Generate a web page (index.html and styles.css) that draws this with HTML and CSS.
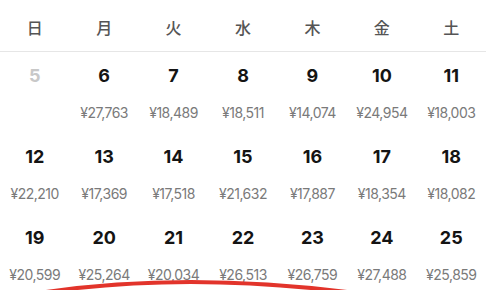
FILE: index.html
```html
<!DOCTYPE html>
<html lang="ja">
<head>
<meta charset="utf-8">
<link rel="stylesheet" href="styles.css">
</head>
<body>
<div class="cal">
  <div class="head">
    <div>日</div><div>月</div><div>火</div><div>水</div><div>木</div><div>金</div><div>土</div>
  </div>
  <div class="week">
    <div class="cell"><span class="date muted">5</span><span class="price"></span></div>
    <div class="cell"><span class="date">6</span><span class="price">¥27,763</span></div>
    <div class="cell"><span class="date">7</span><span class="price">¥18,489</span></div>
    <div class="cell"><span class="date">8</span><span class="price">¥18,511</span></div>
    <div class="cell"><span class="date">9</span><span class="price">¥14,074</span></div>
    <div class="cell"><span class="date">10</span><span class="price">¥24,954</span></div>
    <div class="cell"><span class="date">11</span><span class="price">¥18,003</span></div>
  </div>
  <div class="week">
    <div class="cell"><span class="date">12</span><span class="price">¥22,210</span></div>
    <div class="cell"><span class="date">13</span><span class="price">¥17,369</span></div>
    <div class="cell"><span class="date">14</span><span class="price">¥17,518</span></div>
    <div class="cell"><span class="date">15</span><span class="price">¥21,632</span></div>
    <div class="cell"><span class="date">16</span><span class="price">¥17,887</span></div>
    <div class="cell"><span class="date">17</span><span class="price">¥18,354</span></div>
    <div class="cell"><span class="date">18</span><span class="price">¥18,082</span></div>
  </div>
  <div class="week">
    <div class="cell"><span class="date">19</span><span class="price">¥20,599</span></div>
    <div class="cell"><span class="date">20</span><span class="price">¥25,264</span></div>
    <div class="cell"><span class="date">21</span><span class="price">¥20,034</span></div>
    <div class="cell"><span class="date">22</span><span class="price">¥26,513</span></div>
    <div class="cell"><span class="date">23</span><span class="price">¥26,759</span></div>
    <div class="cell"><span class="date">24</span><span class="price">¥27,488</span></div>
    <div class="cell"><span class="date">25</span><span class="price">¥25,859</span></div>
  </div>
  <svg class="mark" width="486" height="290" viewBox="0 0 486 290">
    <path d="M46 292 Q185 272 347 292" fill="none" stroke="#e2342b" stroke-width="4" stroke-linecap="round"/>
  </svg>
</div>
</body>
</html>
```
FILE: styles.css
```css
html, body {
  margin: 0;
  padding: 0;
  background: #fff;
  overflow: hidden;
}
.cal {
  position: relative;
  width: 486px;
  height: 290px;
  font-family: Inter, "Noto Sans CJK JP", sans-serif;
}
.head {
  display: grid;
  grid-template-columns: repeat(7, 1fr);
  height: 52px;
  align-items: center;
  border-bottom: 1px solid #e6e6e6;
  box-sizing: border-box;
  font-family: "Noto Sans CJK JP", sans-serif;
  font-size: 16px;
  font-weight: 500;
  color: #555;
  text-align: center;
  padding-top: 2px;
}
.week {
  display: grid;
  grid-template-columns: repeat(7, 1fr);
}
.cell {
  display: flex;
  flex-direction: column;
  align-items: center;
  padding: 13px 0 11px;
  gap: 17px;
}
.date {
  font-size: 18px;
  font-weight: 700;
  line-height: 22px;
  color: #141414;
}
.date.muted {
  color: #c8c8c8;
}
.price {
  font-size: 14px;
  line-height: 18px;
  height: 18px;
  color: #7a7a7a;
  letter-spacing: -0.5px;
}
.mark {
  position: absolute;
  left: 0;
  top: 0;
  pointer-events: none;
}
```
